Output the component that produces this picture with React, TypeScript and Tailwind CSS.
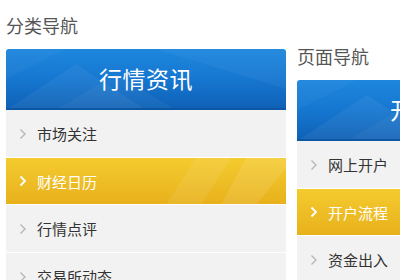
import React from "react";

const font = { fontFamily: '"Microsoft YaHei", "Noto Sans CJK SC", "Noto Sans", sans-serif' };

function Chevron({ active }: { active: boolean }) {
  return (
    <svg width="8" height="12" viewBox="0 0 8 12" className="shrink-0">
      <polyline
        points="1.5,1.5 6,6 1.5,10.5"
        fill="none"
        stroke={active ? "#ffffff" : "#b5b5b5"}
        strokeWidth={active ? 1.8 : 1.3}
      />
    </svg>
  );
}

function Header({ title }: { title: string }) {
  return (
    <div className="relative h-[61px] rounded-t-[3px] overflow-hidden bg-gradient-to-b from-[#1e87dd] via-[#1677d1] to-[#0f62b6] border-b-[2px] border-[#0c57a4] flex items-center justify-center">
      <svg className="absolute inset-0" width="280" height="61" viewBox="0 0 280 61" preserveAspectRatio="none">
        <polygon points="0,61 70,15 140,61" fill="#ffffff" opacity="0.05" />
        <polygon points="50,61 110,25 170,61" fill="#ffffff" opacity="0.04" />
        <polygon points="150,0 280,0 280,40" fill="#ffffff" opacity="0.04" />
        <polygon points="0,0 60,0 0,30" fill="#ffffff" opacity="0.03" />
      </svg>
      <span className="relative text-white text-[23px] leading-none tracking-[0.5px]">{title}</span>
    </div>
  );
}

function Item({ label, active }: { label: string; active?: boolean }) {
  if (active) {
    return (
      <div className="relative h-[47px] border-b border-white overflow-hidden bg-gradient-to-b from-[#f4cb2f] to-[#e8b11b] flex items-center pl-[13px] gap-[10px]">
        <svg className="absolute inset-0" width="280" height="47" viewBox="0 0 280 47" preserveAspectRatio="none">
          <polygon points="190,0 225,0 195,47 160,47" fill="#ffffff" opacity="0.08" />
          <polygon points="240,0 280,0 280,10 250,47 215,47" fill="#ffffff" opacity="0.1" />
        </svg>
        <span className="relative"><Chevron active /></span>
        <span className="relative text-white text-[15px] leading-none">{label}</span>
      </div>
    );
  }
  return (
    <div className="h-[48px] border-b border-white bg-[#f2f2f2] flex items-center pl-[13px] gap-[10px]">
      <Chevron active={false} />
      <span className="text-[#333333] text-[15px] leading-none">{label}</span>
    </div>
  );
}

function Panel({ title, header, items, activeIndex }: { title: string; header: string; items: string[]; activeIndex: number }) {
  return (
    <div className="w-[280px] shrink-0">
      <div className="text-[18px] leading-[24px] text-[#555555] pt-[13px] mb-[12px]">{title}</div>
      <Header title={header} />
      <div>
        {items.map((it, i) => (
          <Item key={it} label={it} active={i === activeIndex} />
        ))}
      </div>
    </div>
  );
}

export default function App() {
  return (
    <div className="w-[400px] h-[280px] overflow-hidden bg-white" style={font}>
      <div className="flex items-start gap-[11px] pl-[6px]">
        <Panel title="分类导航" header="行情资讯" items={["市场关注", "财经日历", "行情点评", "交易所动态"]} activeIndex={1} />
        <div className="mt-[31px]">
          <Panel title="页面导航" header="开户指南" items={["网上开户", "开户流程", "资金出入", "常见问题"]} activeIndex={1} />
        </div>
      </div>
    </div>
  );
}
